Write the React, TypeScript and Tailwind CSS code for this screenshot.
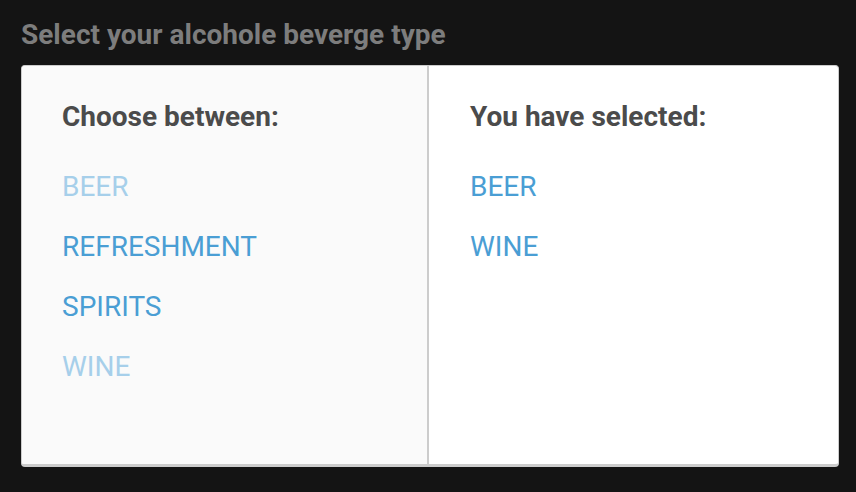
import React from 'react';

const options = [
  { label: 'BEER', selected: true },
  { label: 'REFRESHMENT', selected: false },
  { label: 'SPIRITS', selected: false },
  { label: 'WINE', selected: true },
];

export default function App() {
  const selected = options.filter((o) => o.selected);
  return (
    <div className="w-[856px] h-[492px] bg-[#141414] pl-[21px] pr-[17px] pt-[19px] font-['Roboto',sans-serif]">
      <h1 className="text-[28px] leading-[32px] font-bold text-[#7d7d7d] mb-[14px]">
        Select your alcohole beverge type
      </h1>
      <div className="flex h-[402px] rounded-[4px] overflow-hidden border border-[#cccccc] border-b-[3px] bg-white">
        <div className="w-[407px] bg-[#fafafa] border-r-2 border-[#cccccc] pl-[40px] pt-[35px]">
          <h2 className="text-[28px] leading-[32px] font-bold text-[#4b4b4b] mb-[24px]">Choose between:</h2>
          <ul className="flex flex-col">
            {options.map((o) => (
              <li
                key={o.label}
                className={
                  'text-[28px] leading-[60px] ' + (o.selected ? 'text-[#a6cfea]' : 'text-[#4a9ed4]')
                }
              >
                {o.label}
              </li>
            ))}
          </ul>
        </div>
        <div className="flex-1 pl-[41px] pt-[35px]">
          <h2 className="text-[28px] leading-[32px] font-bold text-[#4b4b4b] mb-[24px]">You have selected:</h2>
          <ul className="flex flex-col">
            {selected.map((o) => (
              <li key={o.label} className="text-[28px] leading-[60px] text-[#4a9ed4]">
                {o.label}
              </li>
            ))}
          </ul>
        </div>
      </div>
    </div>
  );
}
